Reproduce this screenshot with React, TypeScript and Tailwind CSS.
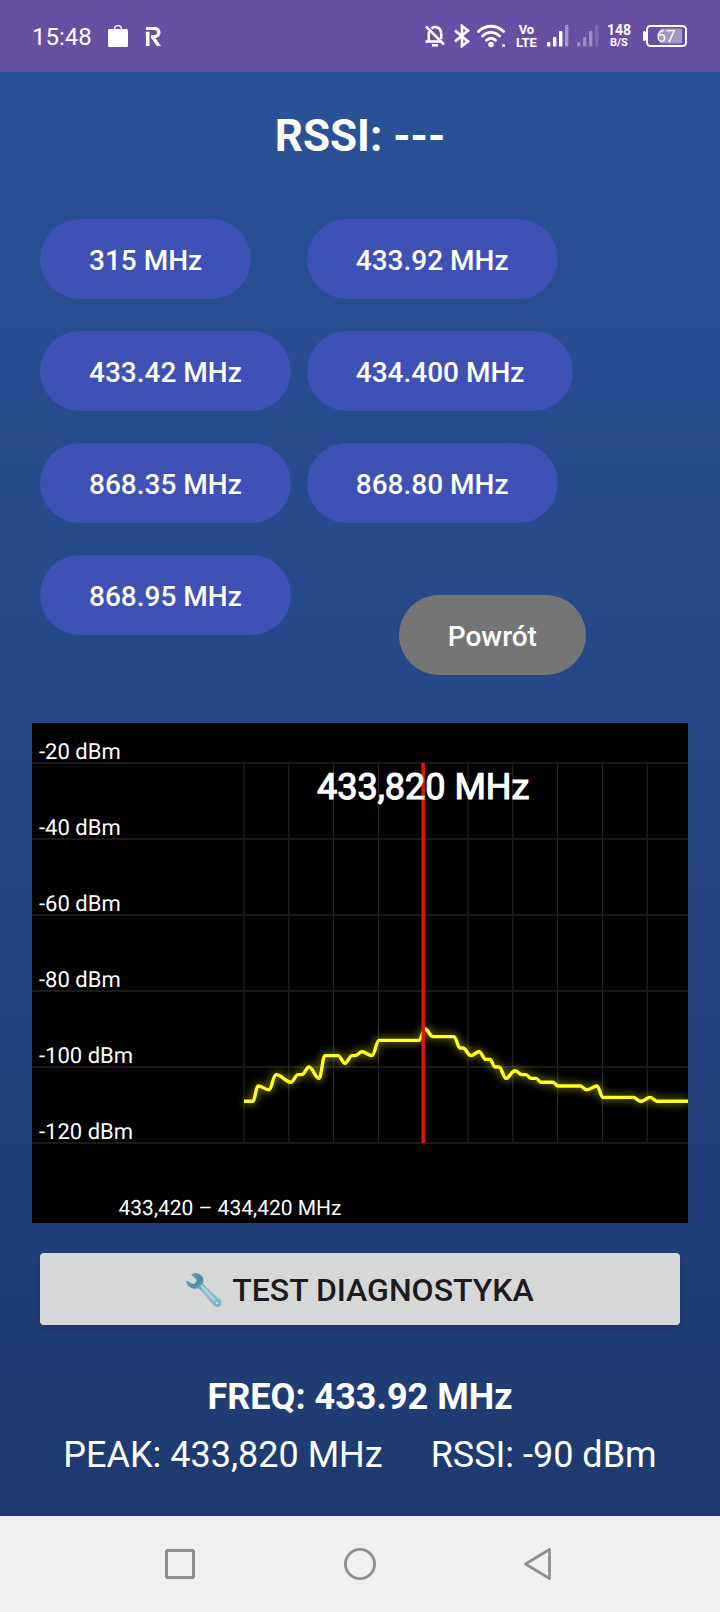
import { useState } from "react";
import { SiRevolut } from "react-icons/si";

const FREQUENCIES = ["315", "433.92", "433.42", "434.400", "868.35", "868.80", "868.95"];

// [x on the chart, level in dBm] where the sweep changes direction
const SWEEP: [number, number][] = [
  [212, -109], [221, -109], [226, -105], [237, -106], [244, -102], [259, -104], [266, -102], [270, -102],
  [277, -100], [287, -103], [293, -97], [306, -97], [313, -99], [320, -97], [323, -97], [330, -96],
  [340, -97], [347, -93], [387, -93], [393, -90], [401, -92], [422, -92], [428, -95], [431, -95],
  [439, -97], [447, -96], [454, -98], [458, -98], [463, -100], [467, -100], [474, -103], [483, -101],
  [490, -102], [494, -102], [499, -103], [504, -103], [509, -104], [521, -104], [526, -105], [548, -105],
  [555, -106], [565, -105], [571, -108], [601, -108], [609, -109], [618, -108], [625, -109], [656, -109],
];

const LEVELS = [-20, -40, -60, -80, -100, -120];
const START_X = 212;
const STEP_X = 44.8;

const toX = (column: number) => START_X + column * STEP_X;
const toY = (dbm: number) => 40 + (-20 - dbm) * 3.8;

function tracePath(points: [number, number][]) {
  let path = `M${points[0][0]} ${toY(points[0][1])}`;
  for (let i = 1; i < points.length; i++) {
    const [prevX, prevLevel] = points[i - 1];
    const [x, level] = points[i];
    const bend = (x - prevX) * 0.4;
    path += ` C${prevX + bend} ${toY(prevLevel)} ${x - bend} ${toY(level)} ${x} ${toY(level)}`;
  }
  return path;
}

function SignalIcon({ className }: { className?: string }) {
  return (
    <svg viewBox="0 0 22 22" className={`h-[22px] w-[22px] ${className ?? ""}`} fill="currentColor" aria-hidden="true">
      <rect x="0" y="17" width="3.4" height="4.4" rx="1" />
      <rect x="6" y="12" width="3.4" height="9.4" rx="1" />
      <rect x="12" y="6" width="3.4" height="15.4" rx="1" />
      <rect x="18" y="0" width="3.4" height="21.4" rx="1" opacity="0.4" />
    </svg>
  );
}

function StatusBar() {
  return (
    <header className="flex h-[72px] items-center justify-between bg-[#6750a4] px-8 text-white">
      <div className="flex items-center">
        <span className="pt-0.5 text-2xl">15:48</span>
        <svg viewBox="0 0 20 22" className="ml-4 h-[22px] w-5" aria-hidden="true">
          <path d="M6.5 5V4a3.5 3.5 0 0 1 7 0v1" fill="none" stroke="currentColor" strokeWidth="1.4" />
          <rect y="4" width="20" height="18" rx="1.5" fill="currentColor" />
        </svg>
        <SiRevolut className="ml-4 size-[19px]" aria-hidden="true" />
      </div>
      <div className="flex items-center">
        <svg viewBox="0 0 20 22" className="h-[22px] w-5" fill="none" stroke="currentColor" strokeWidth="2.5" aria-hidden="true">
          <path d="M1 1.5l18 18" />
          <path d="M3.8 6.5V16.500M.5 16.5h15M6.5 3.5C9 1 16.2 1.5 16.2 9v5" />
          <path d="M7 20.3h6" />
        </svg>
        <svg viewBox="0 0 18 24" className="ml-2 h-6 w-[18px]" fill="none" stroke="currentColor" strokeWidth="2.6" aria-hidden="true">
          <path d="M2 6.5l13 11L9 22V2l6 4.5L2 17.5" />
        </svg>
        <svg viewBox="0 0 29 24" className="ml-1.5 h-6 w-[29px]" fill="none" stroke="currentColor" strokeWidth="2.8" strokeLinecap="round" aria-hidden="true">
          <path d="M1.5 7.5c7-7 18-7 25 0M5.5 12c5-4.8 12-4.8 17 0M9.5 16.3c3-2.7 6-2.7 9 0" />
          <circle cx="14" cy="20.5" r="1.4" fill="currentColor" />
          <circle cx="26.5" cy="21.5" r="1.5" fill="currentColor" stroke="none" />
        </svg>
        <span className="ml-2.5 flex flex-col items-center text-[13px] leading-[13px] font-bold">
          <span>Vo</span>
          <span>LTE</span>
        </span>
        <SignalIcon className="ml-2.5" />
        <SignalIcon className="ml-2 opacity-35" />
        <span className="ml-2 flex flex-col items-center font-bold">
          <span className="text-sm leading-[13px]">148</span>
          <span className="text-[11px] leading-3">B/S</span>
        </span>
        <svg viewBox="0 0 45 24" className="ml-3 h-6 w-[45px]" aria-hidden="true">
          <rect y="7" width="3" height="10" rx="1.5" fill="currentColor" />
          <rect x="17" y="4.5" width="22" height="15" rx="1" fill="currentColor" opacity="0.4" />
          <rect x="4" y="2" width="39" height="20" rx="3.5" fill="none" stroke="currentColor" strokeWidth="2" />
          <text x="23" y="18" textAnchor="middle" fontSize="17" fill="currentColor">67</text>
        </svg>
      </div>
    </header>
  );
}

function SpectrumChart() {
  return (
    <svg viewBox="0 0 656 500" className="block h-auto w-full bg-black" textRendering="geometricPrecision" role="img" aria-label="433,420 – 434,420 MHz">
      <defs>
        <filter id="glow" x="-5%" y="-50%" width="110%" height="200%">
          <feGaussianBlur stdDeviation="4" />
        </filter>
      </defs>
      <g stroke="#242424" strokeWidth="1.3">
        {LEVELS.map((level) => (
          <line key={level} x1="0" x2="656" y1={toY(level)} y2={toY(level)} />
        ))}
        {Array.from({ length: 10 }, (_, i) => (
          <line key={i} x1={toX(i)} x2={toX(i)} y1="40" y2="420" />
        ))}
      </g>
      <g fill="#fff">
        {LEVELS.map((level) => (
          <text key={level} x="7" y={toY(level) - 4} fontSize="22">{level} dBm</text>
        ))}
        <text x="198" y="492" textAnchor="middle" fontSize="21">433,420 – 434,420 MHz</text>
      </g>
      <path d={tracePath(SWEEP)} fill="none" stroke="#ffff00" strokeWidth="5" opacity="0.5" filter="url(#glow)" />
      <path d={tracePath(SWEEP)} fill="none" stroke="#ffff21" strokeWidth="3.4" />
      <line x1={toX(4)} x2={toX(4)} y1="40" y2="420" stroke="#e31313" strokeWidth="3.5" />
      <text x={toX(4)} y="76" textAnchor="middle" fontSize="36" fill="#fff" stroke="#fff" strokeWidth="1.2">433,820 MHz</text>
    </svg>
  );
}

function WrenchIcon() {
  return (
    <svg viewBox="0 0 36 36" className="size-9" aria-hidden="true">
      <defs>
        <linearGradient id="steel" x1="0" y1="0" x2="1" y2="1">
          <stop offset="0" stopColor="#6fabbd" />
          <stop offset="0.3" stopColor="#4b8ba3" />
          <stop offset="0.5" stopColor="#8fc3d2" />
          <stop offset="1" stopColor="#82b7c8" />
        </linearGradient>
      </defs>
      <path
        d="M5 2.5C8 .2 13 .4 15.6 3.5c2 2.4 2.4 5.5 1.3 8.3L34 27.5c2 2 2 4.7.2 6.5s-4.7 1.700-6.500-.4L12.5 16.2C8.5 17.5 3.5 16 1.3 12.5.4 11 .2 9.5.6 8.5l5.9 3.3c1.3.6 2.3.1 3.2-1.2 1-1.5 1.2-2.5.2-3.5z"
        fill="url(#steel)"
      />
      <path d="M15.5 14l13 14" stroke="#a9d6e0" strokeWidth="2" strokeLinecap="round" />
      <circle cx="31" cy="31" r="2" fill="#d6d7d7" stroke="#5f9bb0" strokeWidth="0.8" />
    </svg>
  );
}

export default function App() {
  const [frequency, setFrequency] = useState("433.92");

  return (
    <div className="flex min-h-screen flex-col font-[Roboto,sans-serif]">
      <StatusBar />

      <main className="flex flex-1 flex-col bg-linear-to-b from-[#2a5298] to-[#1e3a70] px-8 pt-8 text-white">
        <h1 className="text-center text-[44px] leading-16 font-bold">RSSI: ---</h1>

        <div className="mt-[51px] flex px-2 pb-4">
          <div className="grid grid-cols-[auto_auto] items-start justify-items-start gap-x-4 gap-y-8">
            {FREQUENCIES.map((value) => (
              <button
                key={value}
                type="button"
                onClick={() => setFrequency(value)}
                className="h-20 rounded-full bg-[#3f51b5] px-[49px] pt-1 text-[28px] font-medium whitespace-nowrap"
              >
                {value} MHz
              </button>
            ))}
            <button
              type="button"
              className="mt-10 ml-[92px] h-20 rounded-full bg-[#757575] px-[49px] pt-1 text-[28px] font-medium whitespace-nowrap"
            >
              Powrót
            </button>
          </div>
        </div>

        <div className="mt-8">
          <SpectrumChart />
        </div>

        <button
          type="button"
          className="mx-2 mt-[30px] flex h-[72px] items-center justify-center gap-2.5 rounded-sm bg-[#d6d7d7] pt-0.5 text-[32px] font-medium text-[#1d1b20] shadow-md"
        >
          <WrenchIcon />
          TEST DIAGNOSTYKA
        </button>

        <section className="mt-12 text-center text-4xl">
          <p className="leading-12 font-bold">FREQ: {frequency} MHz</p>
          <div className="mt-2.5 flex justify-center gap-12">
            <span className="leading-12">PEAK: 433,820 MHz</span>
            <span className="leading-12">RSSI: -90 dBm</span>
          </div>
        </section>
      </main>

      <nav className="grid h-24 grid-cols-3 items-center justify-items-center bg-[#f0f0f0] px-[12.5%] text-[#8f8f8f]">
        <button type="button" aria-label="Recents">
          <svg viewBox="0 0 36 36" className="size-9" fill="none" stroke="currentColor" strokeWidth="3">
            <rect x="4.5" y="4.5" width="27" height="27" rx="1" />
          </svg>
        </button>
        <button type="button" aria-label="Home">
          <svg viewBox="0 0 36 36" className="size-9" fill="none" stroke="currentColor" strokeWidth="2.8">
            <circle cx="18" cy="18" r="14.6" />
          </svg>
        </button>
        <button type="button" aria-label="Back">
          <svg viewBox="0 0 36 36" className="size-9" fill="none" stroke="currentColor" strokeWidth="2.8" strokeLinejoin="round">
            <path d="M27.5 3.5v29L3.5 18z" />
          </svg>
        </button>
      </nav>
    </div>
  );
}
